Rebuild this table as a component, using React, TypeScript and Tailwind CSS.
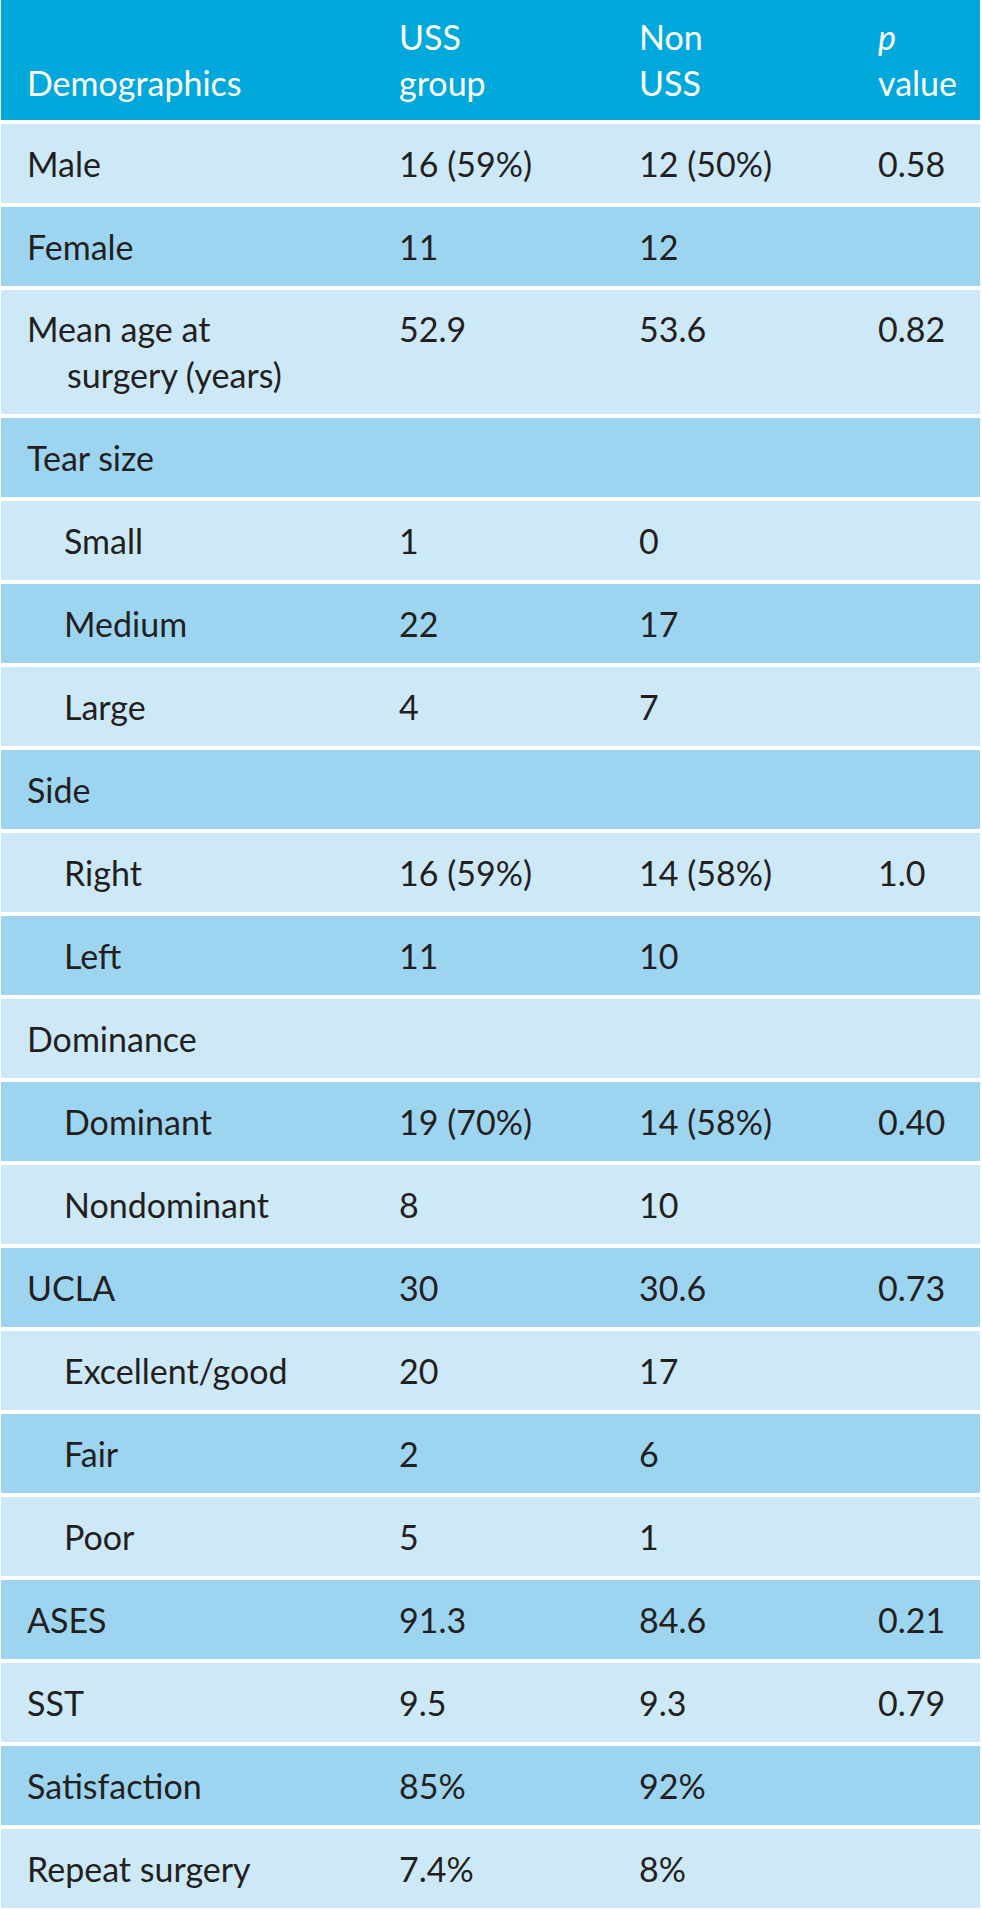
import React from "react";

type Row = { label: string; indent?: boolean; a?: string; b?: string; p?: string; dark: boolean };

const rows: Row[] = [
  { label: "Male", a: "16 (59%)", b: "12 (50%)", p: "0.58", dark: false },
  { label: "Female", a: "11", b: "12", dark: true },
  { label: "__MEAN__", a: "52.9", b: "53.6", p: "0.82", dark: false },
  { label: "Tear size", dark: true },
  { label: "Small", indent: true, a: "1", b: "0", dark: false },
  { label: "Medium", indent: true, a: "22", b: "17", dark: true },
  { label: "Large", indent: true, a: "4", b: "7", dark: false },
  { label: "Side", dark: true },
  { label: "Right", indent: true, a: "16 (59%)", b: "14 (58%)", p: "1.0", dark: false },
  { label: "Left", indent: true, a: "11", b: "10", dark: true },
  { label: "Dominance", dark: false },
  { label: "Dominant", indent: true, a: "19 (70%)", b: "14 (58%)", p: "0.40", dark: true },
  { label: "Nondominant", indent: true, a: "8", b: "10", dark: false },
  { label: "UCLA", a: "30", b: "30.6", p: "0.73", dark: true },
  { label: "Excellent/good", indent: true, a: "20", b: "17", dark: false },
  { label: "Fair", indent: true, a: "2", b: "6", dark: true },
  { label: "Poor", indent: true, a: "5", b: "1", dark: false },
  { label: "ASES", a: "91.3", b: "84.6", p: "0.21", dark: true },
  { label: "SST", a: "9.5", b: "9.3", p: "0.79", dark: false },
  { label: "Satisfaction", a: "85%", b: "92%", dark: true },
  { label: "Repeat surgery", a: "7.4%", b: "8%", dark: false },
];

export default function App() {
  return (
    <div
      className="w-[982px] bg-white text-[34px] leading-[46px] text-[#231f20]"
      style={{ fontFamily: "Lato, 'Open Sans', sans-serif" }}
    >
      <div className="flex flex-col gap-[4px] pl-px pr-[2px]">
        <div className="grid h-[120px] grid-cols-[398px_240px_239px_1fr] items-end bg-[#00a8dc] pb-[14px] text-white">
          <div className="pl-[26px]">Demographics</div>
          <div>
            <div>USS</div>
            <div>group</div>
          </div>
          <div>
            <div>Non</div>
            <div>USS</div>
          </div>
          <div>
            <div className="italic">p</div>
            <div>value</div>
          </div>
        </div>
        {rows.map((r, i) => {
          const bg = r.dark ? "bg-[#9dd5f1]" : "bg-[#cde9f7]";
          if (r.label === "__MEAN__") {
            return (
              <div key={i} className={`grid h-[124px] grid-cols-[398px_240px_239px_1fr] items-start pt-[16px] ${bg}`}>
                <div className="pl-[26px]">
                  <div>Mean age at</div>
                  <div className="pl-[40px]">surgery (years)</div>
                </div>
                <div>{r.a}</div>
                <div>{r.b}</div>
                <div>{r.p}</div>
              </div>
            );
          }
          return (
            <div key={i} className={`grid h-[79px] grid-cols-[398px_240px_239px_1fr] items-center ${bg}`}>
              <div className={r.indent ? "pl-[63px]" : "pl-[26px]"}>{r.label}</div>
              <div>{r.a ?? ""}</div>
              <div>{r.b ?? ""}</div>
              <div>{r.p ?? ""}</div>
            </div>
          );
        })}
      </div>
    </div>
  );
}
